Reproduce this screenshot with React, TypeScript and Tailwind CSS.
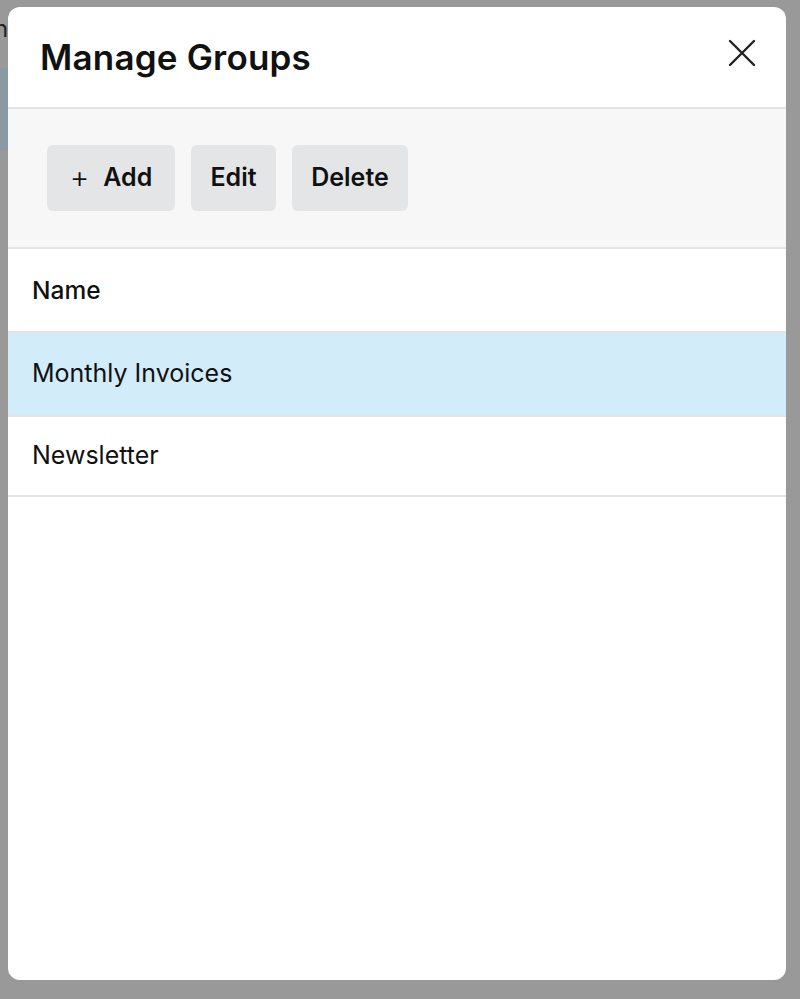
export default function App() {
  return (
    <div className="relative w-[800px] h-[999px] bg-[#999999] overflow-hidden" style={{ fontFamily: 'Inter, "Noto Sans", sans-serif' }}>
      <div className="absolute left-0 top-[68px] w-[10px] h-[82px] bg-[#8a9aa3]" />
      <div className="absolute left-0 top-[14px] w-[8px] overflow-hidden text-[24px] leading-[30px] text-[#222]"><span className="ml-[-6px]">n</span></div>
      <div className="absolute left-[8px] top-[7px] w-[778px] h-[973px] bg-white rounded-[12px] overflow-hidden flex flex-col">
        <div className="h-[102px] flex items-center justify-between pl-[32px] pr-[30px] border-b-2 border-[#e4e4e4] shrink-0">
          <div className="text-[35px] font-semibold text-[#111] tracking-[0.2px]">Manage Groups</div>
          <svg width="28" height="28" viewBox="0 0 28 28" className="mt-[-8px]"><path d="M2 2L26 26M26 2L2 26" stroke="#222" strokeWidth="2.4" strokeLinecap="round" /></svg>
        </div>
        <div className="h-[140px] bg-[#f7f7f7] border-b-2 border-[#e4e4e4] flex items-center gap-[16px] pl-[39px] shrink-0">
          <button className="h-[66px] w-[128px] rounded-[6px] bg-[#e4e5e7] flex items-center justify-center gap-[14px] text-[25px] font-semibold text-[#111]">
            <span className="font-light text-[30px] leading-none mt-[-3px]">+</span>Add
          </button>
          <button className="h-[66px] w-[85px] rounded-[6px] bg-[#e4e5e7] text-[25px] font-semibold text-[#111]">Edit</button>
          <button className="h-[66px] w-[116px] rounded-[6px] bg-[#e4e5e7] text-[25px] font-semibold text-[#111]">Delete</button>
        </div>
        <div className="h-[84px] flex items-center pl-[24px] border-b-2 border-[#e4e4e4] text-[24.5px] font-medium text-[#111] shrink-0">Name</div>
        <div className="h-[84px] flex items-center pl-[24px] border-b-2 border-[#e4e4e4] bg-[#d3ecfa] text-[25px] text-[#111] shrink-0">Monthly Invoices</div>
        <div className="h-[80px] flex items-center pl-[24px] border-b-2 border-[#e4e4e4] text-[25px] text-[#111] shrink-0">Newsletter</div>
      </div>
    </div>
  );
}
